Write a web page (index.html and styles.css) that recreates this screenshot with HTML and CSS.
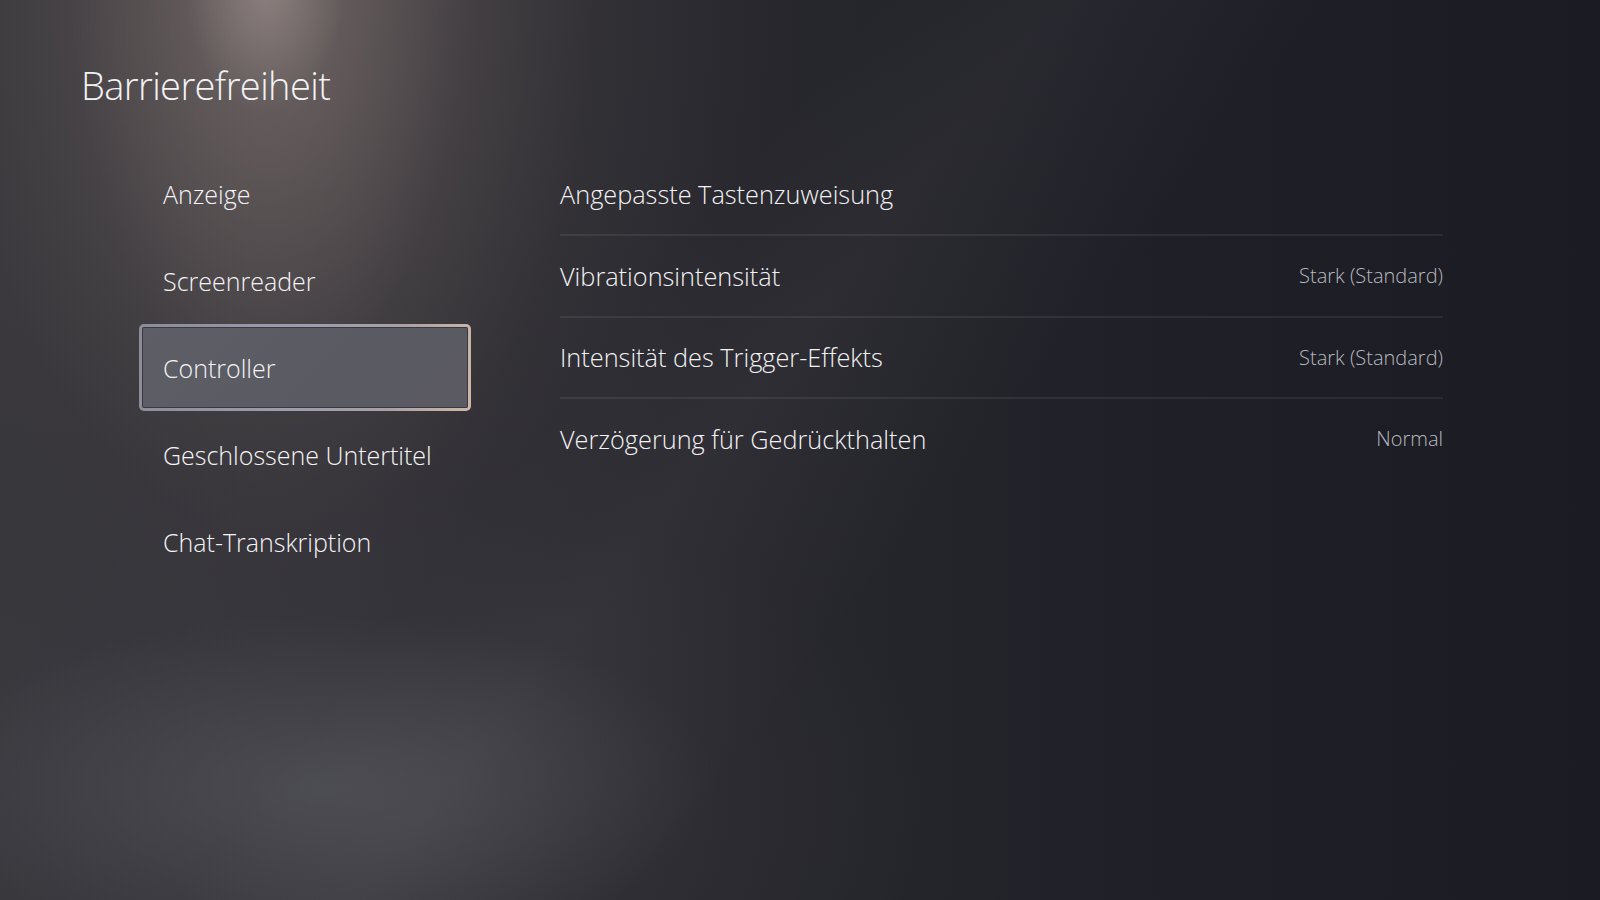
FILE: index.html
```html
<!DOCTYPE html>
<html lang="de">
<head>
<meta charset="utf-8">
<title>Barrierefreiheit</title>
<link rel="stylesheet" href="styles.css">
</head>
<body>
<div class="screen">
  <h1 class="title">Barrierefreiheit</h1>
  <div class="layout">
    <nav class="menu">
      <div class="menu-item">Anzeige</div>
      <div class="menu-item">Screenreader</div>
      <div class="menu-item is-selected">Controller</div>
      <div class="menu-item">Geschlossene Untertitel</div>
      <div class="menu-item">Chat-Transkription</div>
    </nav>
    <section class="settings">
      <div class="row"><span class="label">Angepasste Tastenzuweisung</span></div>
      <div class="row"><span class="label">Vibrationsintensität</span><span class="value">Stark (Standard)</span></div>
      <div class="row"><span class="label">Intensität des Trigger-Effekts</span><span class="value">Stark (Standard)</span></div>
      <div class="row row-last"><span class="label">Verzögerung für Gedrückthalten</span><span class="value">Normal</span></div>
    </section>
  </div>
</div>
</body>
</html>
```

FILE: styles.css
```css
html, body {
  margin: 0;
  padding: 0;
  width: 1600px;
  height: 900px;
  overflow: hidden;
  background: #1d1d25;
}

.screen {
  width: 1600px;
  height: 900px;
  box-sizing: border-box;
  padding-top: 62px;
  font-family: "Open Sans", "Noto Sans", sans-serif;
  color: #f2f2f4;
  background:
    radial-gradient(ellipse 80px 120px at 265px -10px, rgba(180,168,164,0.40), rgba(180,168,164,0) 100%),
    radial-gradient(ellipse 200px 420px at 268px -30px, rgba(150,134,130,0.38), rgba(150,134,130,0) 100%),
    radial-gradient(ellipse 320px 560px at 275px -20px, rgba(125,112,109,0.38), rgba(125,112,109,0) 100%),
    radial-gradient(ellipse 480px 640px at 290px 20px, rgba(95,86,85,0.35), rgba(95,86,85,0) 100%),
    linear-gradient(128deg, rgba(255,255,255,0) 38%, rgba(200,190,190,0.045) 46%, rgba(255,255,255,0) 58%),
    radial-gradient(ellipse 400px 170px at 320px 785px, rgba(92,94,100,0.50), rgba(92,94,100,0) 100%),
    radial-gradient(ellipse 680px 320px at 270px 800px, rgba(66,65,71,0.45), rgba(66,65,71,0) 100%),
    linear-gradient(90deg, #37363b 0%, #323137 22%, #28282e 45%, #202028 70%, #1b1b24 100%);
}

.title {
  margin: 0 0 0 81px;
  font-size: 38px;
  line-height: 46px;
  font-weight: 300;
  letter-spacing: -0.6px;
}

.layout {
  display: flex;
  margin-top: 42px;
}

.menu {
  margin-left: 139px;
  width: 332px;
  display: flex;
  flex-direction: column;
}

.menu-item {
  height: 87px;
  box-sizing: border-box;
  display: flex;
  align-items: center;
  padding-left: 21px;
  font-size: 25px;
  font-weight: 300;
  color: #f4f4f6;
  border: 3px solid transparent;
  border-radius: 5px;
}

.menu-item.is-selected {
  background:
    linear-gradient(135deg, #5e5e66 0%, #5a5a63 60%, #5b5a62 100%) padding-box,
    linear-gradient(100deg, #8c8c98 0%, #9c9cab 45%, #a8a0a6 75%, #cdb8a8 100%) border-box;
  box-shadow: inset 0 0 0 1px rgba(30,30,36,0.55);
}

.settings {
  margin-left: 89px;
  width: 883px;
  padding-top: 4.5px;
  display: flex;
  flex-direction: column;
}

.row {
  height: 81.5px;
  box-sizing: border-box;
  display: flex;
  align-items: center;
  justify-content: space-between;
  border-bottom: 2px solid rgba(255,255,255,0.07);
}

.row-last {
  border-bottom-color: transparent;
}

.label {
  font-size: 25.3px;
  font-weight: 300;
  color: #f2f2f4;
}

.value {
  font-size: 20px;
  font-weight: 300;
  color: #b9b9be;
}
```
